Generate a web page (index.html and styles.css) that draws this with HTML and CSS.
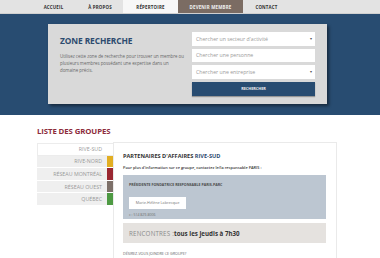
FILE: index.html
```html
<!DOCTYPE html>
<html lang="fr">
<head>
<meta charset="UTF-8">
<meta name="viewport" content="width=device-width, initial-scale=1.0">
<title>Répertoire</title>
<link rel="stylesheet" href="styles.css">
</head>
<body>
<nav class="topnav">
    <a class="nav-item" href="#">ACCUEIL</a>
    <a class="nav-item" href="#">À PROPOS</a>
    <a class="nav-item active" href="#">RÉPERTOIRE</a>
    <a class="nav-item member" href="#">DEVENIR MEMBRE</a>
    <a class="nav-item" href="#">CONTACT</a>
</nav>

<section class="band">
    <div class="search-panel">
        <div class="search-intro">
            <h1>ZONE RECHERCHE</h1>
            <p>Utilisez cette zone de recherche pour trouver un membre ou plusieurs membres possédant une expertise dans un domaine précis.</p>
        </div>
        <form class="search-form">
            <div class="field select">Chercher un secteur d'activité<span class="caret">▾</span></div>
            <div class="field">Chercher une personne</div>
            <div class="field select">Chercher une entreprise<span class="caret">▾</span></div>
            <button type="button" class="search-btn">RECHERCHER</button>
        </form>
    </div>
</section>

<section class="groups">
    <h2>LISTE DES GROUPES</h2>
    <div class="groups-body">
        <ul class="group-list">
            <li class="current">RIVE-SUD</li>
            <li>RIVE-NORD<span class="bar yellow"></span></li>
            <li>RÉSEAU MONTRÉAL<span class="bar red"></span></li>
            <li>RÉSEAU OUEST<span class="bar taupe"></span></li>
            <li>QUÉBEC<span class="bar green"></span></li>
        </ul>
        <div class="group-detail">
            <h3>PARTENAIRES D'AFFAIRES <span>RIVE-SUD</span></h3>
            <p class="lead">Pour plus d'information sur ce groupe, contactez le/la responsable PARIS :</p>
            <div class="contact-box">
                <div class="role">PRÉSIDENTE FONDATRICE RESPONSABLE PARIS-PARC</div>
                <div class="name-chip">Marie-Hélène Labrecque</div>
                <div class="phone">c : 514 829-8006</div>
            </div>
            <div class="meet-box"><span class="meet-label">RENCONTRES :</span> <b>tous les jeudis à 7h30</b></div>
            <div class="join">DÉSIREZ-VOUS JOINDRE CE GROUPE?</div>
            <div class="join-btn"></div>
        </div>
    </div>
</section>
</body>
</html>
```

FILE: styles.css
```css
* {
    box-sizing: border-box;
}
body {
    margin: 0;
    font-family: 'Open Sans', 'Noto Sans', sans-serif;
    background: #fff;
    color: #555;
    overflow: hidden;
}
.topnav {
    display: flex;
    padding-left: 30px;
    height: 14px;
    background: #e3e3e3;
    border-bottom: 1px solid #d0d0d0;
}
.nav-item {
    display: flex;
    align-items: center;
    justify-content: center;
    height: 13px;
    font-size: 4.4px;
    font-weight: 700;
    color: #2f2f2f;
    text-decoration: none;
    letter-spacing: 0.2px;
}
.nav-item:nth-child(1) { width: 47px; }
.nav-item:nth-child(2) { width: 46px; }
.nav-item:nth-child(3) { width: 55px; }
.nav-item:nth-child(4) { width: 65px; }
.nav-item:nth-child(5) { width: 47px; }
.nav-item.active {
    background: #f7f7f7;
}
.nav-item.member {
    background: #7b6c63;
    color: #f2f2f2;
}
.band {
    background: #284c71;
    height: 101px;
    padding: 10px 0 0 48px;
}
.search-panel {
    display: flex;
    width: 279px;
    height: 80px;
    background: #d9d9d9;
    box-shadow: 2px 2px 3px rgba(0, 0, 0, 0.45);
    padding: 8px 12px 0 12px;
}
.search-intro {
    width: 124px;
    padding-top: 3px;
}
.search-intro h1 {
    margin: 0;
    font-size: 8.4px;
    font-weight: 700;
    color: #2d4b6f;
    letter-spacing: -0.1px;
}
.search-intro p {
    margin: 7px 0 0 0;
    font-size: 4.4px;
    line-height: 7px;
    color: #666;
}
.search-form {
    margin-left: 8px;
    width: 123px;
    display: flex;
    flex-direction: column;
    gap: 3px;
}
.field {
    position: relative;
    height: 13.5px;
    background: #fff;
    font-size: 5.2px;
    color: #9a9a9a;
    display: flex;
    align-items: center;
    padding-left: 4px;
}
.caret {
    position: absolute;
    right: 3px;
    font-size: 3.5px;
    color: #555;
}
.search-btn {
    height: 14px;
    border: 0;
    background: #284c71;
    color: #f0f0f0;
    font-family: inherit;
    font-size: 3.8px;
    font-weight: 700;
    padding: 0;
    box-shadow: 0 1px 1px rgba(0, 0, 0, 0.3);
}
.groups {
    padding: 11px 0 0 37px;
}
.groups h2 {
    margin: 0;
    font-size: 7.8px;
    font-weight: 700;
    color: #8d2c3b;
    letter-spacing: -0.1px;
}
.groups-body {
    display: flex;
    margin-top: 6px;
}
.group-list {
    list-style: none;
    margin: 0;
    padding: 0;
    width: 76px;
    margin-top: 1px;
}
.group-list li {
    position: relative;
    height: 12.6px;
    background: #efefef;
    border-bottom: 1px solid #fff;
    font-size: 5.3px;
    color: #999;
    display: flex;
    align-items: center;
    justify-content: flex-end;
    padding-right: 11px;
}
.group-list li.current {
    background: #fff;
    border: 1px solid #ececec;
    border-right: 0;
}
.bar {
    position: absolute;
    right: 0;
    top: 0;
    bottom: 0;
    width: 6px;
}
.yellow { background: #e2ae22; }
.red { background: #9a2731; }
.taupe { background: #7d7069; }
.green { background: #4e9a43; }
.group-detail {
    width: 224px;
    height: 120px;
    border: 1px solid #eaeaea;
    border-bottom: 0;
    padding: 9px 10px 0 9px;
}
.group-detail h3 {
    margin: 0;
    font-size: 5.6px;
    font-weight: 700;
    color: #333;
}
.group-detail h3 span {
    color: #2d4b6f;
}
.lead {
    margin: 5px 0 0 0;
    font-size: 3.9px;
    font-weight: 600;
    color: #333;
}
.contact-box {
    margin-top: 5px;
    height: 44px;
    background: #bcc6d1;
    padding: 7px 6px 0 6px;
}
.role {
    font-size: 3.6px;
    font-weight: 700;
    color: #4a4a4a;
}
.name-chip {
    display: inline-block;
    margin-top: 3px;
    width: 57px;
    height: 12px;
    line-height: 12px;
    background: #fff;
    font-size: 3.8px;
    color: #777;
    text-align: center;
}
.phone {
    margin-top: 3px;
    font-size: 3.5px;
    color: #6f6f6f;
}
.meet-box {
    margin-top: 4px;
    height: 20px;
    background: #e5e2df;
    display: flex;
    align-items: center;
    padding-left: 6px;
    font-size: 6.2px;
    color: #333;
    white-space: pre;
}
.meet-label {
    color: #8a8a8a;
    letter-spacing: 0.2px;
}
.join {
    margin-top: 8px;
    font-size: 3.7px;
    color: #666;
}
.join-btn {
    margin-top: 2px;
    width: 130px;
    height: 10px;
    background: #284c71;
}
```
